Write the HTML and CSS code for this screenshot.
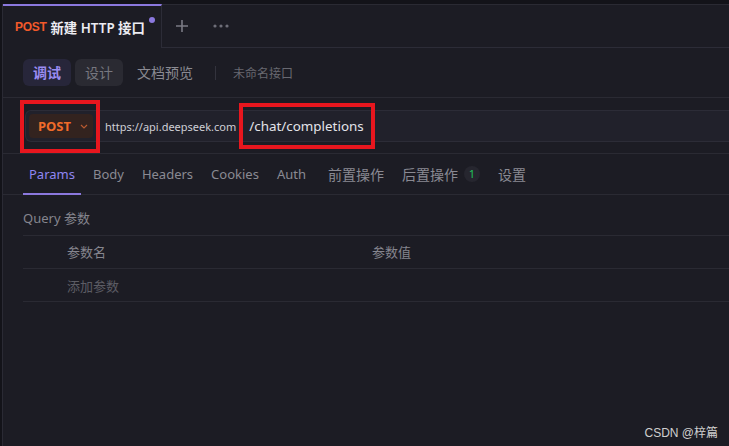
FILE: index.html
```html
<!DOCTYPE html>
<html lang="zh">
<head>
<meta charset="utf-8">
<title>新建 HTTP 接口</title>
<link rel="stylesheet" href="styles.css">
</head>
<body>
<div class="app">
  <div class="tabbar">
    <div class="tab active">
      <span class="tab-method">POST</span>
      <span class="tab-title">新建 HTTP 接口</span>
      <span class="tab-dot"></span>
    </div>
    <div class="tabbar-rest">
      <button class="icon-btn plus" aria-label="新建">
        <svg width="14" height="14" viewBox="0 0 14 14"><path d="M7 1v12M1 7h12" stroke="#7a7a84" stroke-width="1.6" fill="none"/></svg>
      </button>
      <button class="icon-btn more" aria-label="更多">
        <svg width="16" height="4" viewBox="0 0 16 4"><circle cx="2" cy="2" r="1.6" fill="#6e6e78"/><circle cx="8" cy="2" r="1.6" fill="#6e6e78"/><circle cx="14" cy="2" r="1.6" fill="#6e6e78"/></svg>
      </button>
    </div>
  </div>

  <div class="modebar">
    <span class="seg seg-active">调试</span>
    <span class="seg seg-gray">设计</span>
    <span class="seg seg-plain">文档预览</span>
    <span class="divider"></span>
    <span class="api-name">未命名接口</span>
  </div>

  <div class="urlrow">
    <div class="urlbox">
      <div class="method-select">
        <span class="method-text">POST</span>
        <svg class="chev" width="8" height="5" viewBox="0 0 8 5"><path d="M1 1l3 3 3-3" stroke="#b85a30" stroke-width="1.2" fill="none"/></svg>
      </div>
      <span class="base-url">https://api.deepseek.com</span>
      <span class="path">/chat/completions</span>
    </div>
    <span class="mark mark-method"></span>
    <span class="mark mark-path"></span>
  </div>

  <div class="reqtabs">
    <span class="rtab rtab-active">Params</span>
    <span class="rtab">Body</span>
    <span class="rtab">Headers</span>
    <span class="rtab">Cookies</span>
    <span class="rtab">Auth</span>
    <span class="rtab rtab-cjk rtab-first-cjk">前置操作</span>
    <span class="rtab rtab-cjk">后置操作<span class="badge">1</span></span>
    <span class="rtab rtab-cjk">设置</span>
  </div>

  <div class="params">
    <div class="query-label">Query 参数</div>
    <div class="ptable">
      <div class="prow phead">
        <span></span>
        <span>参数名</span>
        <span>参数值</span>
      </div>
      <div class="prow">
        <span></span>
        <span class="placeholder">添加参数</span>
        <span></span>
      </div>
    </div>
  </div>
</div>
<div class="watermark">CSDN @梓篇</div>
</body>
</html>
```

FILE: styles.css
```css
* { box-sizing: border-box; }
html, body { margin: 0; padding: 0; }
body {
  width: 729px;
  height: 446px;
  overflow: hidden;
  background: #131319;
  font-family: "Noto Sans", "Noto Sans CJK SC", sans-serif;
  color: #d8d8de;
  position: relative;
}
.app {
  margin: 4px 0 0 2px;
  height: 442px;
  background: #1c1c24;
  border-left: 1px solid #2a2a34;
}
.tabbar {
  display: flex;
  height: 44px;
}
.tab {
  width: 159px;
  display: flex;
  align-items: center;
  padding-left: 12px;
  border-top: 2px solid #8b78de;
  border-right: 1px solid #2c2c37;
  position: relative;
  font-size: 13px;
}
.tab-method {
  color: #f2592a;
  font-family: "Liberation Sans", "Noto Sans", sans-serif;
  font-size: 12px;
  font-weight: 700;
  margin-right: 4px;
  letter-spacing: -0.3px;
}
.tab-title { color: #ececf2; font-weight: 600; font-size: 13.4px; }
.tab-dot {
  position: absolute;
  top: 11px;
  right: 6px;
  width: 6px;
  height: 6px;
  border-radius: 50%;
  background: #8b78de;
}
.tabbar-rest {
  flex: 1;
  display: flex;
  align-items: center;
  border-top: 1px solid #2a2a33;
  border-bottom: 1px solid #2c2c37;
  padding-left: 13px;
  gap: 24px;
}
.icon-btn {
  background: none;
  border: 0;
  padding: 0;
  display: flex;
  align-items: center;
}
.modebar {
  height: 50px;
  display: flex;
  align-items: center;
  padding-left: 20px;
  border-bottom: 1px solid #2a2a33;
  font-size: 14px;
}
.seg {
  height: 27px;
  line-height: 27px;
  padding: 0 10px;
  border-radius: 6px;
  margin-right: 4px;
}
.seg-active { background: #27263a; color: #9b8cf2; font-weight: 700; }
.seg-gray { background: #2a2a32; color: #77777f; }
.seg-plain { color: #8a8a92; }
.divider {
  width: 1px;
  height: 14px;
  background: #33333d;
  margin: 0 17px 0 8px;
}
.api-name { font-size: 12px; color: #686870; }
.urlrow {
  position: relative;
  height: 56px;
  padding: 12px 0 0 22px;
  border-bottom: 1px solid #2a2a33;
}
.urlbox {
  height: 32px;
  display: flex;
  align-items: center;
  background: #21212b;
  border: 1px solid #2c2c37;
  border-right: 0;
  border-radius: 6px 0 0 6px;
  padding-left: 3px;
}
.method-select {
  width: 64px;
  height: 24px;
  display: flex;
  align-items: center;
  padding-left: 9px;
  background: #33231f;
  border-radius: 4px;
}
.method-text {
  color: #f06b2a;
  font-weight: 700;
  font-size: 13px;
  margin-right: 9px;
}
.chev { margin-top: 1px; }
.base-url {
  font-size: 11px;
  color: #cfcfd6;
  margin-left: 12px;
}
.path {
  font-size: 13.4px;
  color: #e4e4ea;
  margin-left: 13px;
}
.mark {
  position: absolute;
  border: 4px solid #e8161e;
}
.mark-method { left: 17px; top: 2px; width: 80px; height: 53px; }
.mark-path { left: 236px; top: 5px; width: 136px; height: 46px; }
.reqtabs {
  height: 41px;
  display: flex;
  align-items: stretch;
  padding-left: 20px;
  border-bottom: 1px solid #2a2a33;
  font-size: 13px;
  gap: 6px;
}
.rtab {
  display: flex;
  align-items: center;
  padding: 0 6px;
  color: #8a8a93;
  border-bottom: 2px solid transparent;
  margin-bottom: -1px;
}
.rtab-cjk { font-size: 14px; }
.rtab-first-cjk { margin-left: 4px; }
.rtab-active { color: #8f86f2; border-bottom-color: #8b78de; }
.badge {
  display: inline-flex;
  align-items: center;
  justify-content: center;
  width: 16px;
  height: 16px;
  border-radius: 50%;
  background: #26262f;
  color: #22c55e;
  font-size: 11px;
  margin-left: 6px;
}
.params { padding: 0 0 0 20px; }
.query-label {
  height: 40px;
  line-height: 46px;
  font-size: 13px;
  color: #85858e;
}
.ptable { border-top: 1px solid #2a2a33; }
.prow {
  display: grid;
  grid-template-columns: 44px 305px 1fr;
  height: 33px;
  align-items: center;
  border-bottom: 1px solid #2a2a33;
  font-size: 13px;
  color: #85858e;
}
.phead span { margin-top: -1px; }
.placeholder { color: #5c5c64; }
.watermark {
  position: absolute;
  right: 11px;
  bottom: 6px;
  font-family: "Liberation Sans", "Noto Sans CJK SC", sans-serif;
  font-size: 12px;
  color: #cfcfcf;
}
```
